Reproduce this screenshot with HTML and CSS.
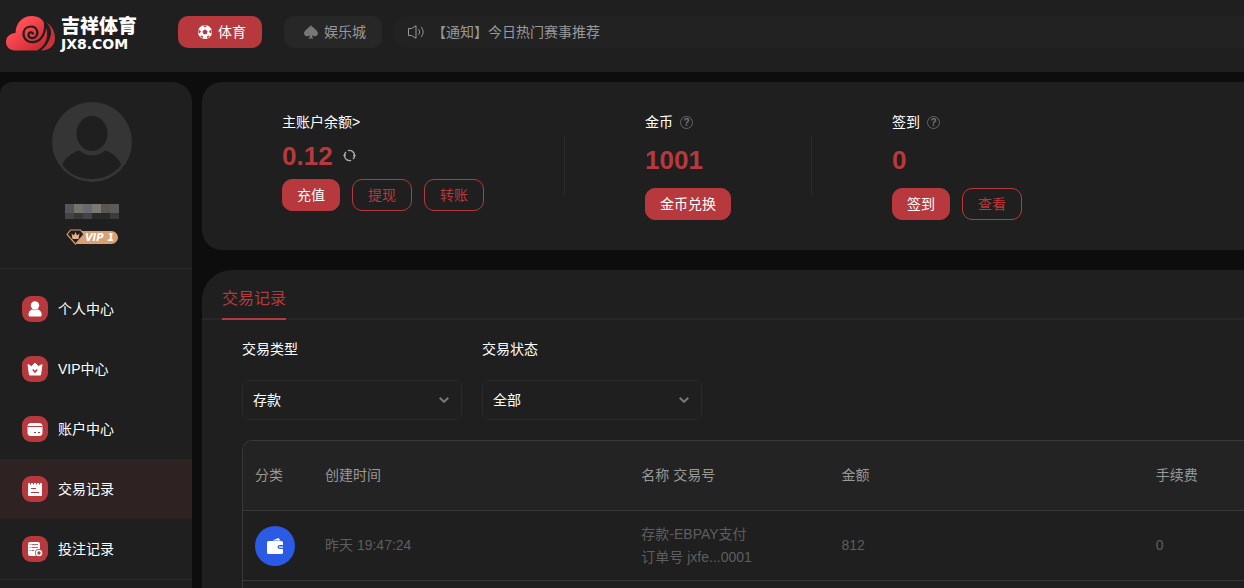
FILE: index.html
```html
<!DOCTYPE html>
<html lang="zh-CN">
<head>
  <meta charset="UTF-8" />
  <meta name="viewport" content="width=device-width, initial-scale=1.0" />
  <title>交易记录 - 吉祥体育</title>
  <link rel="stylesheet" href="styles.css">
</head>
<body>
  <header class="header">
    <a class="logo" href="#">
      <svg width="50" height="35" viewBox="0 0 50 35" aria-hidden="true">
        <defs>
          <linearGradient id="cloud" x1="0" y1="0" x2="1" y2="1">
            <stop offset="0.3" stop-color="#ff4c55" />
            <stop offset="1" stop-color="#c5242c" />
          </linearGradient>
        </defs>
        <path fill="#c9323a" d="M40.500 6.500C44.500 11 46.500 16 44 22C42.500 27 39.500 31 35 34.500C44 34.500 49 29 49 22C49 15 45 9 40.500 6.500Z" />
        <path fill="url(#cloud)" d="M9 34.500C3.500 34.500 0 30.500 0 26C0 21.500 3 17.500 9.500 17C10 6 17 0 26 0C33 0 38 4 39.500 10C43.500 20 40 30 31 34.500Z" />
        <path fill="none" stroke="#1f1f1f" stroke-width="2.200" stroke-linecap="round" d="M27 17.500C26 15.500 22.500 16 22.500 19C22.500 22 27 23.500 30 20.500C33 17 31 10.500 25 10.500C20 10.500 17.500 14 17.500 18C17.500 23 22 26.500 27 26.200C35 25.500 40 18 39 7" />
      </svg>
      <span class="logo-text">
        <span class="logo-name">吉祥体育</span>
        <span class="logo-domain">JX8.COM</span>
      </span>
    </a>

    <button class="nav-btn active" type="button">
      <svg width="14" height="14" viewBox="0 0 14 14" aria-hidden="true">
        <circle cx="7" cy="7" r="7" fill="#fff" />
        <path fill="#b7393d" d="M7 4.300L9.600 6.200L8.600 9.200H5.400L4.400 6.200ZM4.600 0.600H9.400L7 2.600ZM0.600 4.800L3 5.900L1.900 8.300L0.500 8ZM13.400 4.800L11 5.900L12.100 8.300L13.500 8ZM2.300 11.400L3 10.400L5 11.200L4.700 13.300ZM11.700 11.400L11 10.400L9 11.200L9.300 13.300Z" />
      </svg>
      体育
    </button>
    <button class="nav-btn" type="button">
      <svg width="14" height="14" viewBox="0 0 14 14" aria-hidden="true">
        <path fill="#777" d="M7 0C8 2.300 14 5 14 8.500C14 11 10.500 12 8 10.300C8.200 12 8.800 13 9.800 13.600H4.200C5.200 13 5.800 12 6 10.300C3.500 12 0 11 0 8.500C0 5 6 2.300 7 0Z" />
      </svg>
      娱乐城
    </button>

    <div class="notice">
      <svg width="16" height="14" viewBox="0 0 16 14" fill="none" stroke="#999" aria-hidden="true">
        <path d="M0.500 3.500H3.500L8 0.700V13.300L3.500 10.500H0.500ZM10.500 4.200C12 6 12 8 10.500 9.800M13 2C15.800 5 15.800 9 13 12" />
      </svg>
      <span>【通知】今日热门赛事推荐</span>
    </div>
  </header>

  <div class="layout">
    <aside class="sidebar">
      <div class="profile">
        <svg class="avatar" width="80" height="80" viewBox="0 0 80 80" aria-hidden="true">
          <circle cx="40" cy="40" r="40" fill="#353535" />
          <ellipse cx="40" cy="31.500" rx="15.500" ry="17.500" fill="#1f1f1f" />
          <path fill="#1f1f1f" d="M27.500 48.500C34 55 46 55 53 48.500C61 51 68 57 69 63C62 72 51 77 40 77C28 77 17 72 10.500 63C12 57 19 51 27.500 48.500Z" />
        </svg>
        <svg class="masked-name" width="54" height="15" viewBox="0 0 54 15" shape-rendering="crispEdges" aria-hidden="true">
          <path fill="#56535c" d="M0 0h9v9H0z" />
          <path fill="#74736f" d="M9 0h9v9H9z" />
          <path fill="#666b6f" d="M18 0h9v9h-9z" />
          <path fill="#7b7875" d="M27 0h9v9h-9z" />
          <path fill="#5a5752" d="M36 0h9v9h-9z" />
          <path fill="#5a5c5b" d="M45 0h9v9h-9z" />
          <path fill="#434544" d="M0 9h9v6H0z" />
          <path fill="#373737" d="M9 9h9v6H9z" />
          <path fill="#444247" d="M18 9h9v6h-9z" />
          <path fill="#292929" d="M27 9h18v6H27z" />
          <path fill="#3b3b3b" d="M45 9h9v6h-9z" />
        </svg>
        <div class="vip">
          <svg width="19" height="16" viewBox="0 0 19 16" aria-hidden="true">
            <path fill="#1f1f1f" stroke="#d49a6c" stroke-width="1.200" d="M4.500 1H14.500L18 5.500L9.500 15L1 5.500Z" />
            <path fill="#e5b48a" d="M5.500 4.500L8 6.500L9.500 3L11 6.500L13.500 4.500L12.500 10H6.500Z" />
          </svg>
          <span>VIP 1</span>
        </div>
      </div>

      <nav class="menu">
        <a class="menu-item" href="#">
          <svg width="26" height="26" viewBox="0 0 26 26" aria-hidden="true">
            <rect width="26" height="26" rx="9" fill="#b7393d" />
            <circle cx="13" cy="9.500" r="4.200" fill="#fff" />
            <path fill="#fff" d="M6.500 18.500C6.500 15.500 9 13.500 10.500 13.500C12 14.500 14 14.500 15.500 13.500C17 13.500 19.700 15.500 19.700 18.500C19.700 20 19 20.500 18 20.500H8C7 20.500 6.500 20 6.500 18.500Z" />
          </svg>
          个人中心
        </a>
        <a class="menu-item" href="#">
          <svg width="26" height="26" viewBox="0 0 26 26" aria-hidden="true">
            <rect width="26" height="26" rx="9" fill="#b7393d" />
            <path fill="#fff" stroke="#fff" stroke-linejoin="round" d="M6 8.500L9.500 10.500L13 7L16.500 10.500L20 8.500L18.500 19H7.500Z" />
            <path fill="none" stroke="#b7393d" stroke-width="1.500" d="M10.800 13.500L13 16L15.200 13.500" />
          </svg>
          VIP中心
        </a>
        <a class="menu-item" href="#">
          <svg width="26" height="26" viewBox="0 0 26 26" aria-hidden="true">
            <rect width="26" height="26" rx="9" fill="#b7393d" />
            <rect x="5.500" y="7" width="15" height="13" rx="3.500" fill="#fff" />
            <path stroke="#b7393d" d="M5.500 10.500H20.500M12 16.500H14M16 16.500H18" />
          </svg>
          账户中心
        </a>
        <a class="menu-item active" href="#">
          <svg width="26" height="26" viewBox="0 0 26 26" aria-hidden="true">
            <rect width="26" height="26" rx="9" fill="#b7393d" />
            <rect x="6" y="7" width="14" height="13" rx="1" fill="#fff" />
            <path stroke="#b7393d" d="M8.500 6V8.500M11.500 6V8.500M14.500 6V8.500M17.500 6V8.500M9 12.500H14M9 16.500H17" />
          </svg>
          交易记录
        </a>
        <a class="menu-item" href="#">
          <svg width="26" height="26" viewBox="0 0 26 26" aria-hidden="true">
            <rect width="26" height="26" rx="9" fill="#b7393d" />
            <rect x="6" y="6" width="12" height="14" rx="2" fill="#fff" />
            <path stroke="#b7393d" stroke-opacity="0.800" d="M7.500 8.500H8.500M9.500 8.500H16M7.500 11.500H8.500M9.500 11.500H16M7.500 14.500H8.500M9.500 14.500H12" />
            <circle cx="17" cy="17" r="4" fill="#b7393d" />
            <circle cx="17" cy="17" r="2.500" fill="none" stroke="#fff" stroke-width="1.600" />
          </svg>
          投注记录
        </a>
      </nav>
    </aside>

    <main class="content">
      <section class="wallet">
        <div class="wallet-block">
          <a class="wallet-title" href="#">主账户余额&gt;</a>
          <div class="amount compact">
            0.12
            <button class="icon-btn" type="button" aria-label="刷新">
              <svg width="13" height="13" viewBox="0 0 13 13" fill="none" stroke="#aaa" stroke-width="1.400">
                <path d="M1.500 6.500A5 5 0 0 1 3 2.900M4.800 1.700A5 5 0 0 1 11.500 6.500M11.500 6.500A5 5 0 0 1 10 10.100M8.200 11.300A5 5 0 0 1 1.500 6.500" />
                <path fill="#aaa" stroke="none" d="M0 7H3.200L1.500 4.500ZM9.800 6H13L11.500 8.500Z" />
              </svg>
            </button>
          </div>
          <div class="buttons">
            <button class="btn solid" type="button">充值</button>
            <button class="btn" type="button">提现</button>
            <button class="btn" type="button">转账</button>
          </div>
        </div>
        <div class="divider"></div>
        <div class="wallet-block">
          <div class="wallet-title">
            金币
            <button class="help" type="button">?</button>
          </div>
          <div class="amount">1001</div>
          <div class="buttons">
            <button class="btn solid" type="button">金币兑换</button>
          </div>
        </div>
        <div class="divider"></div>
        <div class="wallet-block">
          <div class="wallet-title">
            签到
            <button class="help" type="button">?</button>
          </div>
          <div class="amount">0</div>
          <div class="buttons">
            <button class="btn solid" type="button">签到</button>
            <button class="btn" type="button">查看</button>
          </div>
        </div>
      </section>

      <section class="records">
        <div class="tabs">
          <a class="tab" href="#">交易记录</a>
        </div>

        <form class="filters">
          <div class="field">
            <label for="type">交易类型</label>
            <div class="select">
              <select id="type">
                <option>存款</option>
              </select>
              <svg width="10" height="6" viewBox="0 0 10 6" fill="none" stroke="#777" stroke-width="2" aria-hidden="true">
                <path d="M0.700 0.700L5 4.800L9.300 0.700" />
              </svg>
            </div>
          </div>
          <div class="field">
            <label for="status">交易状态</label>
            <div class="select">
              <select id="status">
                <option>全部</option>
              </select>
              <svg width="10" height="6" viewBox="0 0 10 6" fill="none" stroke="#777" stroke-width="2" aria-hidden="true">
                <path d="M0.700 0.700L5 4.800L9.300 0.700" />
              </svg>
            </div>
          </div>
        </form>

        <div class="table-wrap">
          <table>
            <thead>
              <tr>
                <th class="col-kind">分类</th>
                <th class="col-time">创建时间</th>
                <th class="col-name">名称 交易号</th>
                <th class="col-sum">金额</th>
                <th>手续费</th>
              </tr>
            </thead>
            <tbody>
              <tr>
                <td>
                  <svg width="40" height="40" viewBox="0 0 40 40" aria-hidden="true">
                    <circle cx="20" cy="20" r="20" fill="#2b5be5" />
                    <path fill="#fff" d="M17.500 14.500L23.500 12L25.500 14.500ZM13.500 15H26.500Q28 15 28 16.500V19H25Q22.500 19 22.500 21T25 23H28V26.500Q28 28 26.500 28H13.500Q12 28 12 26.500V16.500Q12 15 13.500 15Z" />
                    <path fill="#fff" d="M24 20.500H28V21.700H24Z" />
                  </svg>
                </td>
                <td>昨天 19:47:24</td>
                <td>存款-EBPAY支付<br>订单号 jxfe...0001</td>
                <td>812</td>
                <td>0</td>
              </tr>
            </tbody>
          </table>
        </div>
      </section>
    </main>
  </div>
</body>
</html>
```
FILE: styles.css
```css
:root {
  --red: #b7393d;
  --panel: #1f1f1f;
  --raised: #232323;
  --line: #2a2a2a;
  --bg: #0d0d0d;
  --text: #fff;
  --muted: #999;
  --dim: #5e5e5e;
}

* {
  box-sizing: border-box;
}

body {
  margin: 0;
  min-height: 100vh;
  display: flex;
  flex-direction: column;
  background-color: var(--bg);
  color: var(--text);
  font-family: "Liberation Sans", "Noto Sans CJK SC", sans-serif;
  font-size: 14px;
  line-height: 20px;
}

a {
  color: inherit;
  text-decoration: none;
}

button,
select {
  font: inherit;
  color: inherit;
  cursor: pointer;
}

svg {
  display: block;
  flex-shrink: 0;
}

/* header */
.header {
  display: flex;
  align-items: flex-start;
  height: 72px;
  padding: 16px 0 0 6px;
  background-color: var(--panel);
}

.logo {
  display: flex;
  align-items: center;
  gap: 5px;
  width: 172px;
}

.logo-text {
  display: flex;
  flex-direction: column;
}

.logo-name {
  font-size: 19px;
  font-weight: 900;
  line-height: 20px;
}

.logo-domain {
  font-family: "DejaVu Sans", sans-serif;
  font-size: 14px;
  font-weight: bold;
  line-height: 14px;
}

.nav-btn {
  display: flex;
  align-items: center;
  gap: 6px;
  height: 32px;
  margin-right: 22px;
  padding: 0 16px 0 20px;
  border: none;
  border-radius: 10px;
  background-color: #272727;
  color: var(--muted);
}

.nav-btn.active {
  background-color: var(--red);
  color: var(--text);
}

.nav-btn + .notice {
  margin-left: -12px;
}

.notice {
  flex: 1;
  display: flex;
  align-items: center;
  gap: 8px;
  height: 32px;
  padding-left: 16px;
  border-radius: 16px 0 0 16px;
  background-color: #222;
  color: var(--muted);
}

/* page */
.layout {
  flex: 1;
  display: flex;
  gap: 10px;
  padding-top: 10px;
}

.sidebar {
  width: 192px;
  flex-shrink: 0;
  border-radius: 12px 20px 0 0;
  background-color: var(--panel);
}

.profile {
  display: flex;
  flex-direction: column;
  align-items: center;
  height: 187px;
  padding: 20px 8px 0 0;
  border-bottom: 1px solid var(--line);
}

.avatar {
  margin-bottom: 22px;
}

.masked-name {
  margin-bottom: 10px;
}

.vip {
  display: flex;
  align-items: center;
}

/* the gem sits on top of the pill */
.vip svg {
  position: relative;
}

.vip span {
  height: 13px;
  margin-left: -8px;
  padding: 0 4px 0 8px;
  border-radius: 0 7px 7px 0;
  background-color: #d9a173;
  font-family: "DejaVu Sans", sans-serif;
  font-size: 10px;
  font-style: italic;
  font-weight: bold;
  line-height: 13px;
}

.menu {
  padding-top: 10px;
  border-bottom: 1px solid var(--line);
}

.menu-item {
  display: flex;
  align-items: center;
  gap: 10px;
  height: 60px;
  padding-left: 22px;
}

.menu-item.active {
  background-color: #2e2222;
}

.content {
  flex: 1;
  min-width: 0;
  display: flex;
  flex-direction: column;
  gap: 20px;
}

/* wallet */
.wallet {
  display: flex;
  padding: 30px 0;
  border-radius: 20px 0 0 20px;
  background-color: var(--panel);
}

.wallet-block {
  padding: 0 80px;
}

.divider {
  width: 1px;
  height: 60px;
  align-self: center;
  background-color: var(--line);
}

.wallet-title {
  display: flex;
  align-items: center;
  gap: 7px;
  height: 20px;
}

.amount {
  display: flex;
  align-items: center;
  gap: 10px;
  height: 56px;
  color: var(--red);
  font-size: 26px;
  font-weight: bold;
}

.amount.compact {
  height: 47px;
}

.icon-btn {
  padding: 0;
  border: none;
  background: none;
}

.help {
  width: 13px;
  height: 13px;
  padding: 0;
  border: 1px solid #666;
  border-radius: 50%;
  background: none;
  color: #777;
  font-size: 10px;
  font-weight: bold;
  line-height: 11px;
}

.buttons {
  display: flex;
  gap: 12px;
}

.btn {
  height: 32px;
  padding: 0 15px;
  border: 1px solid var(--red);
  border-radius: 10px;
  background: none;
  color: var(--red);
}

.btn.solid {
  padding: 0 14px;
  background-color: var(--red);
  color: var(--text);
}

/* records */
.records {
  flex: 1;
  display: flex;
  flex-direction: column;
  border-radius: 30px 0 0 0;
  background-color: var(--panel);
}

.tabs {
  display: flex;
  height: 50px;
  padding-left: 20px;
  border-bottom: 2px solid #272727;
}

.tab {
  height: 50px;
  border-bottom: 2px solid var(--red);
  color: var(--red);
  font-size: 16px;
  line-height: 58px;
}

.filters {
  display: flex;
  gap: 20px;
  padding: 20px 40px;
}

.field {
  width: 220px;
}

.field label {
  display: block;
  margin-bottom: 22px;
  line-height: 18px;
}

.select {
  position: relative;
}

.select select {
  display: block;
  width: 100%;
  height: 40px;
  padding: 0 10px;
  appearance: none;
  border: 1px solid var(--line);
  border-radius: 6px;
  background-color: var(--panel);
}

.select svg {
  position: absolute;
  top: 17px;
  right: 13px;
  pointer-events: none;
}

.table-wrap {
  flex: 1;
  margin-left: 40px;
  border: 1px solid #383838;
  border-width: 1px 0 0 1px;
  border-radius: 10px 0 0 0;
  overflow: hidden;
}

table {
  width: 100%;
  table-layout: fixed;
  border-collapse: separate;
  border-spacing: 0;
}

th,
td {
  height: 70px;
  padding: 0 12px;
  border-bottom: 1px solid #383838;
  text-align: left;
}

th {
  padding-bottom: 2px;
  background-color: var(--raised);
  color: var(--muted);
  font-weight: normal;
}

td {
  color: var(--dim);
  line-height: 23px;
}

.col-kind {
  width: 70px;
}

.col-time {
  width: 31.6%;
}

.col-name {
  width: 20%;
}

.col-sum {
  width: 31.4%;
}
```
